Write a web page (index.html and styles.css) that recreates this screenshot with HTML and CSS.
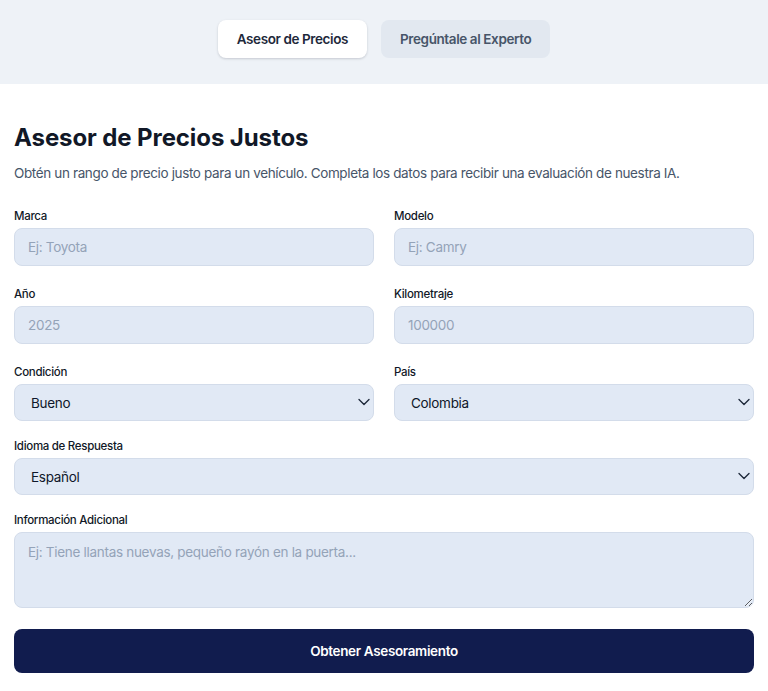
FILE: index.html
```html
<!DOCTYPE html>
<html lang="es">
<head>
<meta charset="utf-8">
<title>Asesor de Precios</title>
<link rel="stylesheet" href="styles.css">
</head>
<body>
<header class="topbar">
  <nav class="tabs">
    <button class="tab tab-active" type="button">Asesor de Precios</button>
    <button class="tab" type="button">Pregúntale al Experto</button>
  </nav>
</header>
<main class="content">
  <h1 class="title">Asesor de Precios Justos</h1>
  <p class="intro">Obtén un rango de precio justo para un vehículo. Completa los datos para recibir una evaluación de nuestra IA.</p>
  <form class="form">
    <div class="grid">
      <div class="field">
        <label class="label">Marca</label>
        <input class="control" type="text" placeholder="Ej: Toyota">
      </div>
      <div class="field">
        <label class="label">Modelo</label>
        <input class="control" type="text" placeholder="Ej: Camry">
      </div>
      <div class="field">
        <label class="label">Año</label>
        <input class="control" type="text" placeholder="2025">
      </div>
      <div class="field">
        <label class="label">Kilometraje</label>
        <input class="control" type="text" placeholder="100000">
      </div>
      <div class="field">
        <label class="label">Condición</label>
        <div class="select-wrap">
          <select class="control select"><option>Bueno</option></select>
          <svg class="chev" viewBox="0 0 12 12" width="12" height="12"><path d="M1 3.5l5 5 5-5" fill="none" stroke="#1e293b" stroke-width="1.35" stroke-linecap="round" stroke-linejoin="round"/></svg>
        </div>
      </div>
      <div class="field">
        <label class="label">País</label>
        <div class="select-wrap">
          <select class="control select"><option>Colombia</option></select>
          <svg class="chev" viewBox="0 0 12 12" width="12" height="12"><path d="M1 3.5l5 5 5-5" fill="none" stroke="#1e293b" stroke-width="1.35" stroke-linecap="round" stroke-linejoin="round"/></svg>
        </div>
      </div>
    </div>
    <div class="field">
      <label class="label">Idioma de Respuesta</label>
      <div class="select-wrap">
        <select class="control select"><option>Español</option></select>
        <svg class="chev" viewBox="0 0 12 12" width="12" height="12"><path d="M1 3.5l5 5 5-5" fill="none" stroke="#1e293b" stroke-width="1.35" stroke-linecap="round" stroke-linejoin="round"/></svg>
      </div>
    </div>
    <div class="field">
      <label class="label">Información Adicional</label>
      <textarea class="control textarea" placeholder="Ej: Tiene llantas nuevas, pequeño rayón en la puerta..."></textarea>
    </div>
    <button class="submit" type="button">Obtener Asesoramiento</button>
  </form>
</main>
</body>
</html>
```

FILE: styles.css
```css
* { box-sizing: border-box; }
html, body { margin: 0; padding: 0; background: #ffffff; }
body { font-family: Inter, "Noto Sans", sans-serif; color: #0f172a; }

.topbar {
  background: #eef2f7;
  height: 84px;
  display: flex;
  justify-content: center;
  align-items: flex-start;
  padding-top: 20px;
}
.tabs { display: flex; gap: 14px; }
.tab {
  font-family: inherit;
  font-size: 13.5px;
  letter-spacing: -0.4px;
  font-weight: 600;
  height: 38px;
  border: none;
  border-radius: 8px;
  background: #e2e8f0;
  color: #475569;
  padding: 0 19px;
  cursor: pointer;
}
.tab-active {
  background: #ffffff;
  color: #1e293b;
  box-shadow: 0 1px 3px rgba(15, 23, 42, 0.12), 0 1px 2px rgba(15, 23, 42, 0.06);
}

.content { padding: 0 14px; }
.title {
  margin: 38px 0 0;
  font-size: 24px;
  line-height: 32px;
  font-weight: 700;
  color: #111827;
  letter-spacing: -0.1px;
}
.intro {
  margin: 9px 0 0;
  font-size: 13.5px;
  letter-spacing: -0.37px;
  line-height: 20px;
  color: #475569;
}
.form {
  margin-top: 25px;
  display: flex;
  flex-direction: column;
  gap: 17px;
}
.grid {
  display: grid;
  grid-template-columns: 1fr 1fr;
  column-gap: 20px;
  row-gap: 20px;
}
.field { display: flex; flex-direction: column; }
.label {
  font-size: 11.5px;
  letter-spacing: -0.3px;
  line-height: 16px;
  font-weight: 500;
  color: #111827;
  margin-bottom: 4px;
}
.control {
  font-family: inherit;
  font-size: 13.5px;
  letter-spacing: -0.3px;
  height: 38px;
  width: 100%;
  background: #e1e9f5;
  border: 1px solid #d3dcea;
  border-radius: 8px;
  padding: 0 13px;
  color: #0f172a;
  outline: none;
}
.control::placeholder { color: #94a3b8; }
.select-wrap { position: relative; }
.select {
  appearance: none;
  -webkit-appearance: none;
  height: 37px;
  padding-left: 16px;
}
.chev {
  position: absolute;
  right: 4px;
  top: 12px;
  pointer-events: none;
}
.textarea {
  height: 76px;
  padding: 9px 13px;
  resize: vertical;
  line-height: 20px;
}
.submit {
  margin-top: 4px;
  height: 44px;
  width: 100%;
  border: none;
  border-radius: 8px;
  background: #111c4e;
  color: #ffffff;
  font-family: inherit;
  font-size: 13.5px;
  letter-spacing: -0.35px;
  font-weight: 600;
  cursor: pointer;
}
```
